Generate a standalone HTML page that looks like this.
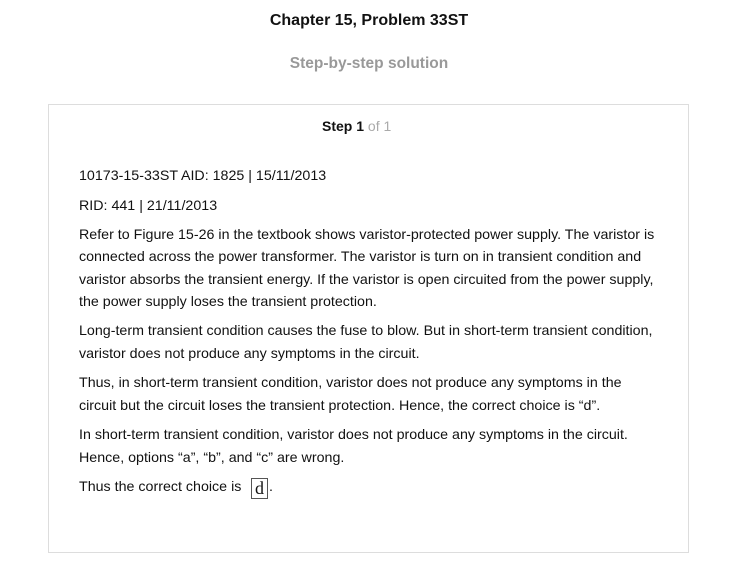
<!DOCTYPE html>
<html><head><style>
body{margin:0;width:738px;height:579px;background:#fff;font-family:"Liberation Sans",Arial,sans-serif;color:#111;position:relative;overflow:hidden}
.a{position:absolute;white-space:nowrap}
.t{left:79px;font-size:14.25px;line-height:16px}
</style></head><body>
<div class="a" style="left:0;width:738px;text-align:center;top:12px;font-size:16px;font-weight:bold;color:#111">Chapter 15, Problem 33ST</div>
<div class="a" style="left:0;width:738px;text-align:center;top:55px;font-size:15.5px;font-weight:bold;color:#999">Step-by-step solution</div>
<div class="a" style="left:48px;top:104px;width:639px;height:447px;border:1px solid #ddd"></div>
<div class="a" style="left:322px;top:118px;font-size:14px"><b>Step 1</b> <span style="color:#aaa">of 1</span></div>
<div class="a t" style="top:168px">10173-15-33ST AID: 1825 | 15/11/2013</div>
<div class="a t" style="top:198px">RID: 441 | 21/11/2013</div>
<div class="a t" style="top:227px">Refer to Figure 15-26 in the textbook shows varistor-protected power supply. The varistor is</div>
<div class="a t" style="top:249px">connected across the power transformer. The varistor is turn on in transient condition and</div>
<div class="a t" style="top:272px">varistor absorbs the transient energy. If the varistor is open circuited from the power supply,</div>
<div class="a t" style="top:294px">the power supply loses the transient protection.</div>
<div class="a t" style="top:323px">Long-term transient condition causes the fuse to blow. But in short-term transient condition,</div>
<div class="a t" style="top:346px">varistor does not produce any symptoms in the circuit.</div>
<div class="a t" style="top:375px">Thus, in short-term transient condition, varistor does not produce any symptoms in the</div>
<div class="a t" style="top:398px">circuit but the circuit loses the transient protection. Hence, the correct choice is “d”.</div>
<div class="a t" style="top:427px">In short-term transient condition, varistor does not produce any symptoms in the circuit.</div>
<div class="a t" style="top:450px">Hence, options “a”, “b”, and “c” are wrong.</div>
<div class="a t" style="top:479px">Thus the correct choice is</div>
<div class="a" style="left:251px;top:478px;width:15px;height:19px;border:1px solid #555;font-family:'Liberation Serif',serif;font-size:18px;line-height:19px;text-align:center">d</div>
<div class="a t" style="left:269px;top:479px">.</div>
</body></html>
